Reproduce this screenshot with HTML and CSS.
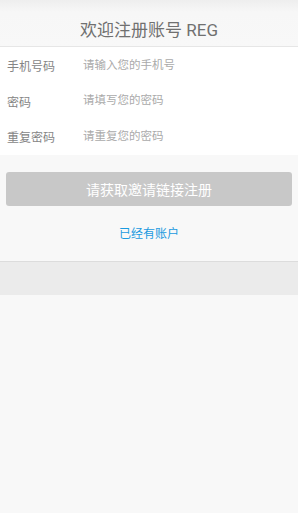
FILE: index.html
```html
<!DOCTYPE html>
<html lang="zh-CN">
<head>
  <meta charset="UTF-8">
  <meta name="viewport" content="width=device-width, initial-scale=1.0">
  <title>欢迎注册账号 REG</title>
  <link rel="stylesheet" href="styles.css">
</head>
<body>
  <div class="header">
    <h1 class="header__title">欢迎注册账号 REG</h1>
  </div>
  <div class="form">
    <label class="form__row">
      <span class="form__label">手机号码</span>
      <input class="form__input" type="tel" placeholder="请输入您的手机号">
    </label>
    <label class="form__row">
      <span class="form__label">密码</span>
      <input class="form__input" type="password" placeholder="请填写您的密码">
    </label>
    <label class="form__row">
      <span class="form__label">重复密码</span>
      <input class="form__input" type="password" placeholder="请重复您的密码">
    </label>
  </div>
  <div class="actions">
    <button class="button button--disabled">请获取邀请链接注册</button>
    <a class="login-link" href="#">已经有账户</a>
  </div>
  <div class="footer-band"></div>
</body>
</html>
```

FILE: styles.css
```css
* {
  box-sizing: border-box;
}

html,
body {
  margin: 0;
  height: 100%;
  overflow: hidden;
}

body {
  font-family: "Noto Sans CJK SC", "Liberation Sans", sans-serif;
  background: #f8f8f8;
  color: #777;
}

.header {
  height: 47px;
  border-bottom: 1px solid #e6e6e6;
  background: linear-gradient(#eeeeee, #f7f7f7 12px, #f8f8f8);
  display: flex;
  align-items: center;
  justify-content: center;
  padding-top: 10px;
}

.header__title {
  margin: 0;
  font-size: 17px;
  font-weight: normal;
  color: #707070;
  font-family: Roboto, "Noto Sans CJK SC", sans-serif;
}

.form {
  background: #fff;
  padding-bottom: 1px;
}

.form__row {
  display: flex;
  align-items: center;
  height: 35.5px;
}

.form__label {
  width: 83px;
  padding-left: 7px;
  padding-top: 2px;
  font-size: 12px;
  color: #858585;
}

.form__input {
  flex: 1;
  border: 0;
  outline: none;
  background: transparent;
  padding: 0;
  margin-bottom: 2px;
  font-family: inherit;
  font-size: 11.5px;
  color: #444;
}

.form__input::placeholder {
  color: #aaa;
}

.actions {
  display: flex;
  flex-direction: column;
  align-items: center;
  padding: 17px 6px 0;
  height: 107px;
  border-bottom: 1px solid #dcdcdc;
}

.button {
  appearance: none;
  -webkit-appearance: none;
  border: none;
  width: 100%;
  height: 34px;
  border-radius: 3px;
  font-family: inherit;
  font-size: 14px;
  color: #fff;
}

.button--disabled {
  background: #c8c8c8;
}

.login-link {
  margin-top: 18px;
  font-size: 12px;
  color: #1a9ae0;
  text-decoration: none;
}

.footer-band {
  height: 33px;
  background: #ebebeb;
}
```
